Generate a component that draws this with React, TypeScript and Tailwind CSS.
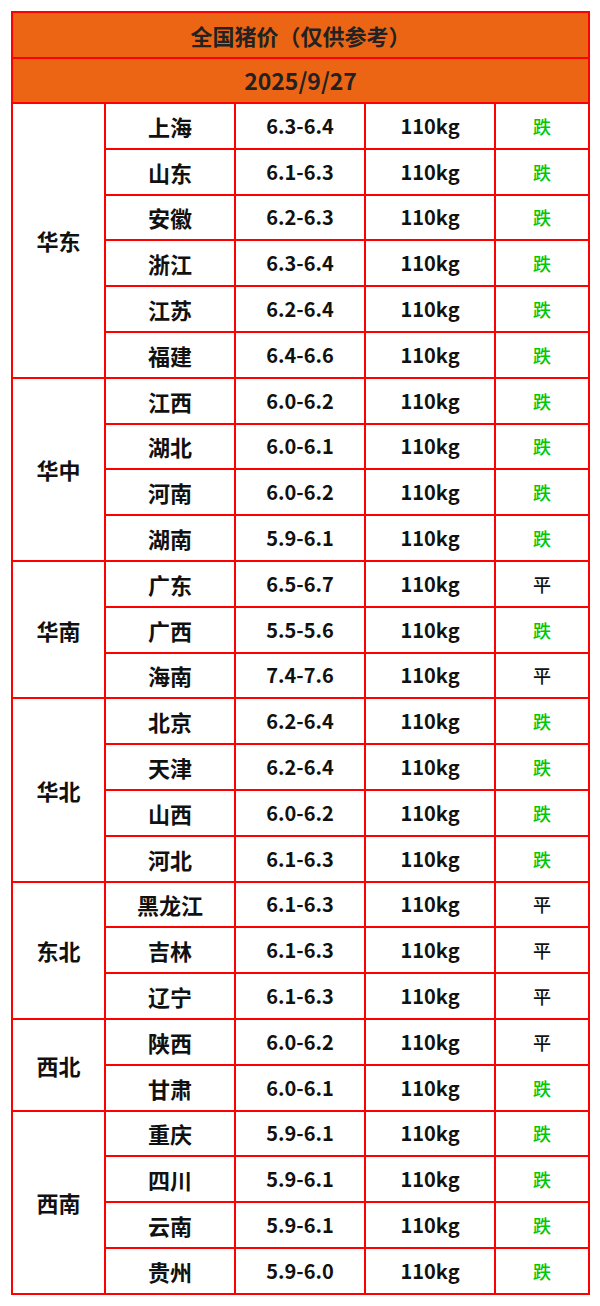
type Row = { city: string; price: string; trend: "跌" | "平" };
type Group = { region: string; rows: Row[] };

const groups: Group[] = [
  {
    region: "华东",
    rows: [
      { city: "上海", price: "6.3-6.4", trend: "跌" },
      { city: "山东", price: "6.1-6.3", trend: "跌" },
      { city: "安徽", price: "6.2-6.3", trend: "跌" },
      { city: "浙江", price: "6.3-6.4", trend: "跌" },
      { city: "江苏", price: "6.2-6.4", trend: "跌" },
      { city: "福建", price: "6.4-6.6", trend: "跌" },
    ],
  },
  {
    region: "华中",
    rows: [
      { city: "江西", price: "6.0-6.2", trend: "跌" },
      { city: "湖北", price: "6.0-6.1", trend: "跌" },
      { city: "河南", price: "6.0-6.2", trend: "跌" },
      { city: "湖南", price: "5.9-6.1", trend: "跌" },
    ],
  },
  {
    region: "华南",
    rows: [
      { city: "广东", price: "6.5-6.7", trend: "平" },
      { city: "广西", price: "5.5-5.6", trend: "跌" },
      { city: "海南", price: "7.4-7.6", trend: "平" },
    ],
  },
  {
    region: "华北",
    rows: [
      { city: "北京", price: "6.2-6.4", trend: "跌" },
      { city: "天津", price: "6.2-6.4", trend: "跌" },
      { city: "山西", price: "6.0-6.2", trend: "跌" },
      { city: "河北", price: "6.1-6.3", trend: "跌" },
    ],
  },
  {
    region: "东北",
    rows: [
      { city: "黑龙江", price: "6.1-6.3", trend: "平" },
      { city: "吉林", price: "6.1-6.3", trend: "平" },
      { city: "辽宁", price: "6.1-6.3", trend: "平" },
    ],
  },
  {
    region: "西北",
    rows: [
      { city: "陕西", price: "6.0-6.2", trend: "平" },
      { city: "甘肃", price: "6.0-6.1", trend: "跌" },
    ],
  },
  {
    region: "西南",
    rows: [
      { city: "重庆", price: "5.9-6.1", trend: "跌" },
      { city: "四川", price: "5.9-6.1", trend: "跌" },
      { city: "云南", price: "5.9-6.1", trend: "跌" },
      { city: "贵州", price: "5.9-6.0", trend: "跌" },
    ],
  },
];

const cell = "border-2 border-[#ff0000] text-center align-middle p-0";

export default function App() {
  return (
    <div
      className="bg-white w-[600px] h-[1306px] pt-[11px] pl-[11px]"
      style={{ fontFamily: '"Noto Sans CJK SC", "Noto Sans", sans-serif' }}
    >
      <table className="border-collapse table-fixed w-[577px] text-[#111] font-bold text-[20px] leading-none">
        <colgroup>
          <col className="w-[93px]" />
          <col className="w-[130px]" />
          <col className="w-[130px]" />
          <col className="w-[130px]" />
          <col className="w-[94px]" />
        </colgroup>
        <thead className="text-[#222]">
          <tr className="h-[46px] bg-[#ec6514]">
            <th colSpan={5} className={`${cell} text-[22px]`}>
              全国猪价（仅供参考）
            </th>
          </tr>
          <tr className="h-[45px] bg-[#ec6514]">
            <th colSpan={5} className={`${cell} text-[23px]`}>
              2025/9/27
            </th>
          </tr>
        </thead>
        <tbody>
          {groups.map((g) =>
            g.rows.map((r, i) => (
              <tr key={r.city} className="h-[45.8px]">
                {i === 0 && (
                  <td rowSpan={g.rows.length} className={`${cell} text-[22px]`}>
                    {g.region}
                  </td>
                )}
                <td className={`${cell} text-[22px]`}>{r.city}</td>
                <td className={cell}>{r.price}</td>
                <td className={cell}>110kg</td>
                <td
                  className={`${cell} font-medium text-[18px] ${
                    r.trend === "跌" ? "text-[#00c800]" : "text-[#111]"
                  }`}
                >
                  {r.trend}
                </td>
              </tr>
            ))
          )}
        </tbody>
      </table>
    </div>
  );
}
